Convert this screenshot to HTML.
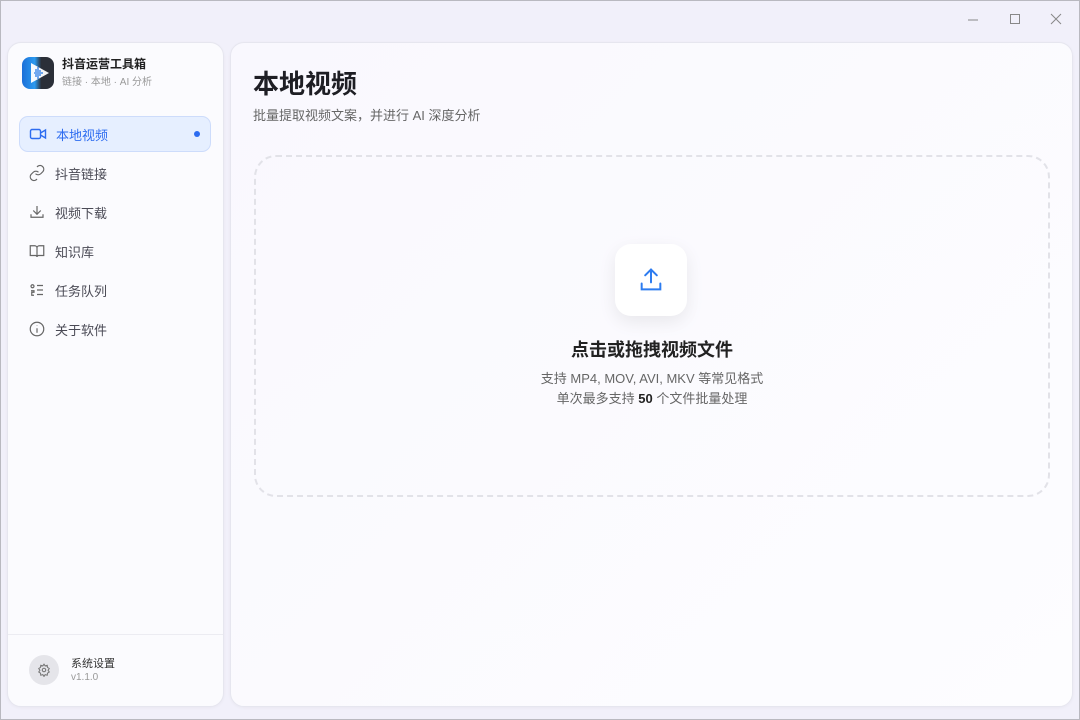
<!DOCTYPE html><html><head><meta charset="utf-8"><style>
*{box-sizing:border-box;margin:0;padding:0}
body{width:1080px;height:720px;overflow:hidden;font-family:"Liberation Sans","Noto Sans CJK SC",sans-serif;background:#f1f0fa;position:relative;border:1px solid #b9b9c0}
.tb{position:absolute;top:0;left:0;right:0;height:36px}
.panel{position:absolute;background:#fbfbfe;border:1px solid #e6e6ef;border-radius:14px;box-shadow:0 1px 3px rgba(0,0,0,.04)}
.side{left:6px;top:41px;width:217px;height:665px}
.main{left:229px;top:41px;width:843px;height:665px;background:linear-gradient(135deg,#f9f8fe,#fdfdff)}
.nav{position:absolute;left:11px;width:192px;height:36px;border-radius:9px;display:flex;align-items:center;font-size:13px;color:#4a4a55}
.nav svg{position:absolute;left:9px}
.nav span{position:absolute;left:36px}
.act{background:#e6efff;border:1px solid #cddcfb;color:#2d6cf0}
</style></head><body>
<div class="tb">
<svg style="position:absolute;left:965px;top:12px" width="14" height="14"><line x1="2" y1="7" x2="12" y2="7" stroke="#888" stroke-width="1"/></svg>
<svg style="position:absolute;left:1007px;top:11px" width="14" height="14"><rect x="2.5" y="2.5" width="9" height="9" fill="none" stroke="#888"/></svg>
<svg style="position:absolute;left:1048px;top:11px" width="14" height="14"><path d="M2 2L12 12M12 2L2 12" stroke="#888"/></svg>
</div>
<div class="panel side">
<div style="position:absolute;left:14px;top:14px;width:32px;height:32px;border-radius:8px;background:linear-gradient(90deg,#1c6fd8 0,#2a9af0 40%,#2b2f38 60%,#2b2f38);overflow:hidden">
<svg width="32" height="32"><path d="M9 6L27 16L9 26Z" fill="#fff" opacity=".95"/><path d="M12 16h1M14 12v8M16 10v12M18 13v6M20 15v2" stroke="#2b7ee8" stroke-width="1.3"/></svg></div>
<div style="position:absolute;left:54px;top:12px;font-size:12px;font-weight:bold;color:#222">抖音运营工具箱</div>
<div style="position:absolute;left:54px;top:30px;font-size:10px;color:#999">链接 · 本地 · AI 分析</div>
<div class="nav act" style="top:73px"><svg width="18" height="18" viewBox="0 0 18 18" fill="none" stroke="#2d6cf0" stroke-width="1.4"><rect x="1.5" y="4.5" width="10" height="9" rx="1.5"/><path d="M11.5 8l5-3v8l-5-3"/></svg><span>本地视频</span><i style="position:absolute;right:10px;width:6px;height:6px;border-radius:50%;background:#2d6cf0"></i></div>
<div class="nav" style="top:112px"><svg width="18" height="18" viewBox="0 0 24 24" fill="none" stroke="#666" stroke-width="1.6"><path d="M10 13a5 5 0 0 0 7 0l3-3a5 5 0 0 0-7-7l-1 1"/><path d="M14 11a5 5 0 0 0-7 0l-3 3a5 5 0 0 0 7 7l1-1"/></svg><span>抖音链接</span></div>
<div class="nav" style="top:151px"><svg width="18" height="18" viewBox="0 0 24 24" fill="none" stroke="#666" stroke-width="1.6"><path d="M4 15v4h16v-4M12 4v11M7 10l5 5 5-5"/></svg><span>视频下载</span></div>
<div class="nav" style="top:190px"><svg width="18" height="18" viewBox="0 0 24 24" fill="none" stroke="#666" stroke-width="1.6"><path d="M3 5h6a3 3 0 0 1 3 3v12a2 2 0 0 0-2-2H3zM21 5h-6a3 3 0 0 0-3 3v12a2 2 0 0 1 2-2h7z"/></svg><span>知识库</span></div>
<div class="nav" style="top:229px"><svg width="18" height="18" viewBox="0 0 24 24" fill="none" stroke="#666" stroke-width="1.6"><circle cx="6" cy="7" r="2"/><path d="M4 13h4v2H5v4h3M12 6h8M12 12h8M12 18h8"/></svg><span>任务队列</span></div>
<div class="nav" style="top:268px"><svg width="18" height="18" viewBox="0 0 24 24" fill="none" stroke="#666" stroke-width="1.6"><circle cx="12" cy="12" r="9"/><path d="M12 11v6M12 7.5v.5"/></svg><span>关于软件</span></div>
<div style="position:absolute;left:0;right:0;top:591px;border-top:1px solid #ececf2"></div>
<div style="position:absolute;left:21px;top:612px;width:30px;height:30px;border-radius:50%;background:#e5e5ea;display:flex;align-items:center;justify-content:center"><svg width="14" height="14" viewBox="0 0 24 24" fill="none" stroke="#777" stroke-width="1.8"><circle cx="12" cy="12" r="3"/><path d="M12 2l2 3 3.5-1 .5 3.5 3 2-2 3 2 3-3 2-.5 3.5-3.5-1-2 3-2-3-3.5 1-.5-3.5-3-2 2-3-2-3 3-2 .5-3.5 3.5 1z"/></svg></div>
<div style="position:absolute;left:63px;top:612px;font-size:11px;color:#333">系统设置</div>
<div style="position:absolute;left:63px;top:629px;font-size:10px;color:#999">v1.1.0</div>
</div>
<div class="panel main">
<div style="position:absolute;left:22px;top:21px;font-size:26px;font-weight:bold;color:#1e1e24">本地视频</div>
<div style="position:absolute;left:22px;top:62px;font-size:13px;color:#666">批量提取视频文案，并进行 AI 深度分析</div>
<div style="position:absolute;left:23px;top:112px;width:796px;height:342px;border:2px dashed #e2e2e8;border-radius:22px;text-align:center">
<div style="position:absolute;left:359px;top:87px;width:72px;height:72px;border-radius:16px;background:#fff;box-shadow:0 6px 18px rgba(0,0,0,.08)"><svg style="margin-top:22px" width="28" height="28" viewBox="0 0 24 24" fill="none" stroke="#2d7cf0" stroke-width="1.7" stroke-linecap="round"><path d="M12 3v11M7 8l5-5 5 5M4 15v5h16v-5"/></svg></div>
<div style="position:absolute;left:0;right:0;top:179px;font-size:18px;font-weight:bold;color:#222">点击或拖拽视频文件</div>
<div style="position:absolute;left:0;right:0;top:211px;font-size:13px;color:#666">支持 MP4, MOV, AVI, MKV 等常见格式</div>
<div style="position:absolute;left:0;right:0;top:231px;font-size:13px;color:#666">单次最多支持 <b style="color:#222">50</b> 个文件批量处理</div>
</div>
</div>
</body></html>
